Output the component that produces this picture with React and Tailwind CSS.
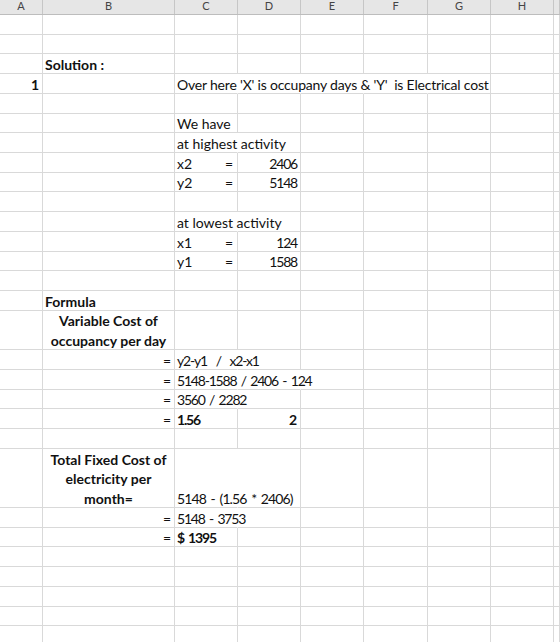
import clsx from "clsx";

const FONT = "font-['Lato','Open_Sans',sans-serif]";

const COLS = [
  { key: "A", w: "w-[43px]" },
  { key: "B", w: "w-[132px]" },
  { key: "C", w: "w-[63px]" },
  { key: "D", w: "w-[63px]" },
  { key: "E", w: "w-[63px]" },
  { key: "F", w: "w-[64px]" },
  { key: "G", w: "w-[63px]" },
  { key: "H", w: "w-[63px]" },
  { key: "I", w: "flex-1" },
];

const HEIGHTS = {
  1: "h-[19.73px]",
  2: "h-[39.46px]",
  3: "h-[59.2px]",
};

// figures sit tighter than the text around them, spaces stay open
const TRACK = {
  text: "tracking-[-0.2px]",
  num: "tracking-[-1.2px]",
  calc: "tracking-[-1.2px] [word-spacing:2px]",
  mixed: "tracking-[-0.9px] [word-spacing:2px]",
};

// open = cells whose right gridline is covered by overflowing text
const ROWS = [
  {},
  {},
  { cells: { B: { text: "Solution :", bold: true } } },
  {
    open: ["C", "D", "E", "F"],
    cells: {
      A: { text: "1", bold: true, align: "right" },
      C: { text: "Over here 'X' is occupany days & 'Y'  is Electrical cost", track: "text" },
    },
  },
  {},
  { cells: { C: { text: "We have" } } },
  { open: ["C"], cells: { C: { text: "at highest activity" } } },
  { cells: { C: { text: "x2", eq: true }, D: { text: "2406", align: "right", track: "num" } } },
  { cells: { C: { text: "y2", eq: true }, D: { text: "5148", align: "right", track: "num" } } },
  {},
  { open: ["C"], cells: { C: { text: "at lowest activity" } } },
  { cells: { C: { text: "x1", eq: true }, D: { text: "124", align: "right", track: "num" } } },
  { cells: { C: { text: "y1", eq: true }, D: { text: "1588", align: "right", track: "num" } } },
  {},
  { cells: { B: { text: "Formula", bold: true } } },
  {
    size: 2,
    cells: {
      B: { lines: ["Variable Cost of", "occupancy per day"], bold: true, align: "center" },
    },
  },
  {
    open: ["C"],
    cells: {
      B: { text: "=", align: "right" },
      C: { text: "y2-y1  /  x2-x1", track: "calc" },
    },
  },
  {
    open: ["C", "D"],
    cells: {
      B: { text: "=", align: "right" },
      C: { text: "5148-1588 / 2406 - 124", track: "calc" },
    },
  },
  {
    open: ["C"],
    cells: { B: { text: "=", align: "right" }, C: { text: "3560 / 2282", track: "calc" } },
  },
  {
    cells: {
      B: { text: "=", align: "right" },
      C: { text: "1.56", bold: true, track: "calc" },
      D: { text: "2", bold: true, align: "right" },
    },
  },
  {},
  {
    size: 3,
    open: ["C"],
    cells: {
      B: {
        lines: ["Total Fixed Cost of", "electricity per", "month="],
        bold: true,
        align: "center",
      },
      C: { text: "5148 - (1.56 * 2406)", track: "mixed" },
    },
  },
  {
    open: ["C"],
    cells: { B: { text: "=", align: "right" }, C: { text: "5148 - 3753", track: "calc" } },
  },
  {
    cells: {
      B: { text: "=", align: "right" },
      C: { text: "$ 1395", bold: true, track: "calc" },
    },
  },
  {},
  {},
  {},
  {},
  {},
];

function Cell({ col, cell, open }) {
  const align = cell?.align ?? "left";

  return (
    <div
      className={clsx(
        "relative flex h-full shrink-0 flex-col justify-end border-b border-r border-b-[#d9d9d9]",
        col.w,
        open ? "border-r-transparent" : "border-r-[#d9d9d9]",
        align === "right" && "items-end pr-[3px]",
        align === "left" && "items-start pl-[2px]",
        align === "center" && "items-center"
      )}
    >
      {cell?.lines && (
        <div className="-mb-[1px] flex flex-col items-center">
          {cell.lines.map((line) => (
            <span key={line} className="whitespace-nowrap font-bold leading-[19.5px]">
              {line}
            </span>
          ))}
        </div>
      )}
      {cell?.text && !cell.eq && (
        <span
          className={clsx(
            "whitespace-pre leading-[17px]",
            cell.bold && "font-bold",
            cell.track && TRACK[cell.track]
          )}
        >
          {cell.text}
        </span>
      )}
      {cell?.eq && (
        <div className="flex w-full justify-between pr-[4px] leading-[17px]">
          <span>{cell.text}</span>
          <span>=</span>
        </div>
      )}
    </div>
  );
}

function Row({ row }) {
  const open = row.open ?? [];
  const cells = row.cells ?? {};

  return (
    <div className={clsx("flex", HEIGHTS[row.size ?? 1])}>
      {COLS.map((col) => (
        <Cell key={col.key} col={col} cell={cells[col.key]} open={open.includes(col.key)} />
      ))}
    </div>
  );
}

function ColumnHeader() {
  return (
    <div className="flex h-[15px] overflow-hidden border-b border-[#bdbdbd] bg-[#e6e6e6]">
      {COLS.map((col) => (
        <div
          key={col.key}
          className={clsx(
            "flex h-full shrink-0 justify-center border-r border-[#c6c6c6] text-[11px] leading-[11px] text-[#444]",
            col.w
          )}
        >
          {col.key !== "I" && <span>{col.key}</span>}
        </div>
      ))}
    </div>
  );
}

export default function App() {
  return (
    <div
      className={clsx(
        "h-[642px] w-[560px] overflow-hidden bg-white text-[14px] text-[#111]",
        FONT
      )}
    >
      <ColumnHeader />
      {ROWS.map((row, i) => (
        <Row key={i} row={row} />
      ))}
    </div>
  );
}
